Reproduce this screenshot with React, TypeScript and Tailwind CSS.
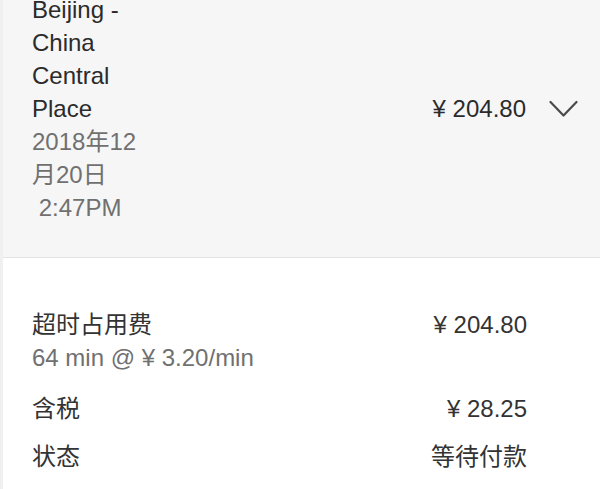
const font = { fontFamily: '"Liberation Sans", "Noto Sans CJK SC", sans-serif' };

function Chevron() {
  return (
    <svg width="30" height="18" viewBox="0 0 30 18" fill="none" className="text-[#4a4a4a]">
      <polyline points="1.5,2 14.5,15.5 27.5,2" stroke="currentColor" strokeWidth="2.2" strokeLinecap="round" strokeLinejoin="round" />
    </svg>
  );
}

function App() {
  const charges = [
    { label: "超时占用费", detail: "64 min @ ¥ 3.20/min", value: "¥ 204.80", gap: "" },
    { label: "含税", detail: "", value: "¥ 28.25", gap: "mt-[18px]" },
    { label: "状态", detail: "", value: "等待付款", gap: "mt-[15px]" },
  ];

  return (
    <main
      className="w-[600px] h-[489px] overflow-hidden bg-white border-l-[3px] border-[#f0f0f0]"
      style={font}
    >
      <div className="bg-[#f6f6f6] border-b border-[#e3e3e3] flex items-center pl-[29px] pr-[21px] pb-[33px] -mt-[7px]">
        <div className="flex-1 flex flex-col text-[24px] leading-[33px]">
          <p className="w-[118px] text-[#2b2b2b]">Beijing - China Central Place</p>
          <p className="w-[118px] text-[#707070]">2018年12月20日</p>
          <p className="text-[#707070] whitespace-pre"> 2:47PM</p>
        </div>
        <span className="text-[24px] text-[#2b2b2b] mr-[23px]">¥ 204.80</span>
        <Chevron />
      </div>

      <div className="pt-[50px] pl-[29px] pr-[73px] text-[24px] leading-[33px]">
        {charges.map((row) => (
          <div key={row.label} className={`flex justify-between ${row.gap}`}>
            <div className="flex flex-col">
              <span className="text-[#333333]">{row.label}</span>
              {row.detail && <span className="text-[#707070]">{row.detail}</span>}
            </div>
            <span className="text-[#333333]">{row.value}</span>
          </div>
        ))}
      </div>
    </main>
  );
}

export default App;
